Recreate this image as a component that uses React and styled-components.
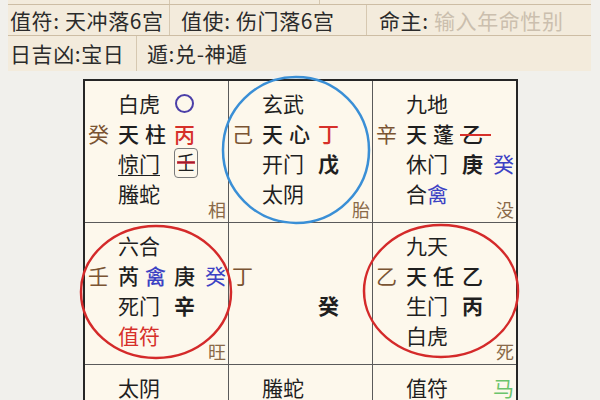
import React from 'react';
import styled, { createGlobalStyle, css } from 'styled-components';

const GlobalStyle = createGlobalStyle`
  html, body { margin: 0; padding: 0; overflow: hidden; }
  body {
    background: #f1f0ec;
    font-family: "Noto Sans CJK SC", "Noto Sans", sans-serif;
    color: #2a2a2a;
  }
`;

const Page = styled.div`
  width: 600px;
  height: 400px;
  overflow: hidden;
`;

const InfoPanel = styled.div`
  margin: 0 9px 0 8px;
  background: #f3ebdc;
`;

const InfoRow = styled.div`
  display: flex;
  height: ${p => p.$h}px;
  line-height: ${p => p.$h}px;
  border-bottom: ${p => (p.$line ? '1px solid #cdbda4' : 'none')};
  overflow: hidden;
`;

const InfoCell = styled.div`
  flex: ${p => (p.$w ? `0 0 ${p.$w}px` : '1 1 auto')};
  box-sizing: border-box;
  padding-left: ${p => p.$pad}px;
  border-right: ${p => (p.$w ? '1px solid #d6c8b1' : 'none')};
  font-size: 21px;
  letter-spacing: 0.6px;
  white-space: nowrap;
  color: #2b2b2b;
`;

const Placeholder = styled.span`
  color: #cbbfae;
`;

const BoardWrap = styled.div`
  position: relative;
  margin: 8px 0 0 83px;
  width: 435px;
`;

const Board = styled.div`
  display: grid;
  grid-template-columns: repeat(3, 143px);
  grid-auto-rows: 141px;
  gap: 1px;
  background: #5a5a5a;
  border: 2px solid #262626;
`;

const Cell = styled.div`
  position: relative;
  background: #fdf8ec;
  box-sizing: border-box;
  padding: 7px 0 0 3px;
  display: grid;
  grid-template-columns: 30px 56px 31px 23px;
  grid-template-rows: repeat(4, 30px);
  align-content: start;
`;

const tones = {
  ink: '#1f1f1f',
  stem: '#7a5433',
  red: '#d6302a',
  blue: '#3c42c4',
  green: '#6cc46c',
};

const Glyph = styled.span`
  grid-column: ${p => p.$c};
  grid-row: ${p => p.$r};
  position: relative;
  font-size: 21px;
  line-height: 30px;
  white-space: nowrap;
  color: ${p => tones[p.$tone || 'ink']};
  font-weight: ${p => (p.$bold ? 700 : 400)};
  ${p => p.$star && css`
    letter-spacing: 6px;
    font-weight: ${p.$bold ? 700 : 500};
  `}
  ${p => p.$under && css`
    justify-self: start;
    text-decoration: underline;
    text-decoration-thickness: 1px;
    text-underline-offset: 3px;
  `}
  ${p => p.$strike && css`
    justify-self: start;
    &::after {
      content: '';
      position: absolute;
      left: -2px;
      right: -2px;
      top: 16px;
      height: 2px;
      background: #d6302a;
    }
  `}
`;

const Tint = styled.span`
  color: ${p => tones[p.$tone]};
`;

const BoxedStem = styled.span`
  grid-column: ${p => p.$c};
  grid-row: ${p => p.$r};
  align-self: center;
  justify-self: start;
  position: relative;
  box-sizing: border-box;
  width: 24px;
  height: 30px;
  border: 1.5px solid #7a7a7a;
  border-radius: 4px;
  font-size: 19px;
  line-height: 26px;
  text-align: center;
  color: #1f1f1f;
  &::after {
    content: '';
    position: absolute;
    left: 2px;
    right: 2px;
    top: 12px;
    height: 3px;
    background: rgba(200, 30, 50, 0.75);
  }
`;

const Ring = styled.span`
  grid-column: ${p => p.$c};
  grid-row: ${p => p.$r};
  align-self: center;
  justify-self: start;
  margin-left: 1px;
  box-sizing: border-box;
  width: 19px;
  height: 19px;
  border: 2px solid #4b3fa8;
  border-radius: 50%;
`;

const Corner = styled.span`
  position: absolute;
  right: 2px;
  bottom: 3px;
  font-size: 18px;
  line-height: 20px;
  color: #8a6a48;
`;

const Overlay = styled.svg`
  position: absolute;
  left: 0;
  top: 0;
  overflow: visible;
  pointer-events: none;
`;

const cells = [
  {
    corner: '相',
    items: [
      { c: 2, r: 1, t: '白虎' },
      { c: 3, r: 1, ring: true },
      { c: 1, r: 2, t: '癸', tone: 'stem' },
      { c: 2, r: 2, t: '天柱', star: true },
      { c: 3, r: 2, t: '丙', tone: 'red', star: true },
      { c: 2, r: 3, t: '惊门', under: true },
      { c: 3, r: 3, t: '壬', box: true },
      { c: 2, r: 4, t: '螣蛇' },
    ],
  },
  {
    corner: '胎',
    items: [
      { c: 2, r: 1, t: '玄武' },
      { c: 1, r: 2, t: '己', tone: 'stem' },
      { c: 2, r: 2, t: '天心', star: true },
      { c: 3, r: 2, t: '丁', tone: 'red', star: true },
      { c: 2, r: 3, t: '开门' },
      { c: 3, r: 3, t: '戊', bold: true },
      { c: 2, r: 4, t: '太阴' },
    ],
  },
  {
    corner: '没',
    items: [
      { c: 2, r: 1, t: '九地' },
      { c: 1, r: 2, t: '辛', tone: 'stem' },
      { c: 2, r: 2, t: '天蓬', star: true },
      { c: 3, r: 2, t: '乙', star: true, strike: true },
      { c: 2, r: 3, t: '休门' },
      { c: 3, r: 3, t: '庚', bold: true },
      { c: 4, r: 3, t: '癸', tone: 'blue' },
      { c: 2, r: 4, parts: [['合'], ['禽', 'blue']] },
    ],
  },
  {
    corner: '旺',
    items: [
      { c: 2, r: 1, t: '六合' },
      { c: 1, r: 2, t: '壬', tone: 'stem' },
      { c: 2, r: 2, star: true, parts: [['芮'], ['禽', 'blue']] },
      { c: 3, r: 2, t: '庚', star: true },
      { c: 4, r: 2, t: '癸', tone: 'blue' },
      { c: 2, r: 3, t: '死门' },
      { c: 3, r: 3, t: '辛', bold: true },
      { c: 2, r: 4, t: '值符', tone: 'red' },
    ],
  },
  {
    items: [
      { c: 1, r: 2, t: '丁', tone: 'stem' },
      { c: 3, r: 3, t: '癸', bold: true },
    ],
  },
  {
    corner: '死',
    items: [
      { c: 2, r: 1, t: '九天' },
      { c: 1, r: 2, t: '乙', tone: 'stem' },
      { c: 2, r: 2, t: '天任', star: true },
      { c: 3, r: 2, t: '乙', star: true },
      { c: 2, r: 3, t: '生门' },
      { c: 3, r: 3, t: '丙', bold: true },
      { c: 2, r: 4, t: '白虎' },
    ],
  },
  { items: [{ c: 2, r: 1, t: '太阴' }] },
  { items: [{ c: 2, r: 1, t: '螣蛇' }] },
  {
    items: [
      { c: 2, r: 1, t: '值符' },
      { c: 4, r: 1, t: '马', tone: 'green' },
    ],
  },
];

function Item({ it }) {
  if (it.ring) return <Ring $c={it.c} $r={it.r} />;
  if (it.box) return <BoxedStem $c={it.c} $r={it.r}>{it.t}</BoxedStem>;
  return (
    <Glyph
      $c={it.c}
      $r={it.r}
      $tone={it.tone}
      $bold={it.bold}
      $star={it.star}
      $under={it.under}
      $strike={it.strike}
    >
      {it.parts
        ? it.parts.map(([txt, tone], i) =>
            tone ? <Tint key={i} $tone={tone}>{txt}</Tint> : <React.Fragment key={i}>{txt}</React.Fragment>
          )
        : it.t}
    </Glyph>
  );
}

export default function App() {
  return (
    <Page>
      <GlobalStyle />
      <InfoPanel>
        <InfoRow $h={4} $line>
          <InfoCell $w={162} $pad={2} />
          <InfoCell $w={150} $pad={10} />
          <InfoCell $pad={10} />
        </InfoRow>
        <InfoRow $h={30} $line>
          <InfoCell $w={162} $pad={2}>值符: 天冲落6宫</InfoCell>
          <InfoCell $w={197} $pad={11}>值使: 伤门落6宫</InfoCell>
          <InfoCell $pad={12}>
            命主: <Placeholder>输入年命性别</Placeholder>
          </InfoCell>
        </InfoRow>
        <InfoRow $h={35}>
          <InfoCell $w={129} $pad={2}>日吉凶:宝日</InfoCell>
          <InfoCell $pad={10}>遁:兑-神遁</InfoCell>
        </InfoRow>
      </InfoPanel>
      <BoardWrap>
        <Board>
          {cells.map((cell, i) => (
            <Cell key={i}>
              {cell.items.map((it, j) => (
                <Item key={j} it={it} />
              ))}
              {cell.corner && <Corner>{cell.corner}</Corner>}
            </Cell>
          ))}
        </Board>
        <Overlay width="435" height="300" viewBox="0 0 435 300">
          <circle cx="213" cy="71" r="73" fill="none" stroke="#3a8fd6" strokeWidth="2.5" />
          <ellipse cx="73" cy="213" rx="75" ry="66" fill="none" stroke="#d42a2a" strokeWidth="2.5" />
          <ellipse cx="358" cy="212" rx="77" ry="66" fill="none" stroke="#d42a2a" strokeWidth="2.5" />
        </Overlay>
      </BoardWrap>
    </Page>
  );
}
